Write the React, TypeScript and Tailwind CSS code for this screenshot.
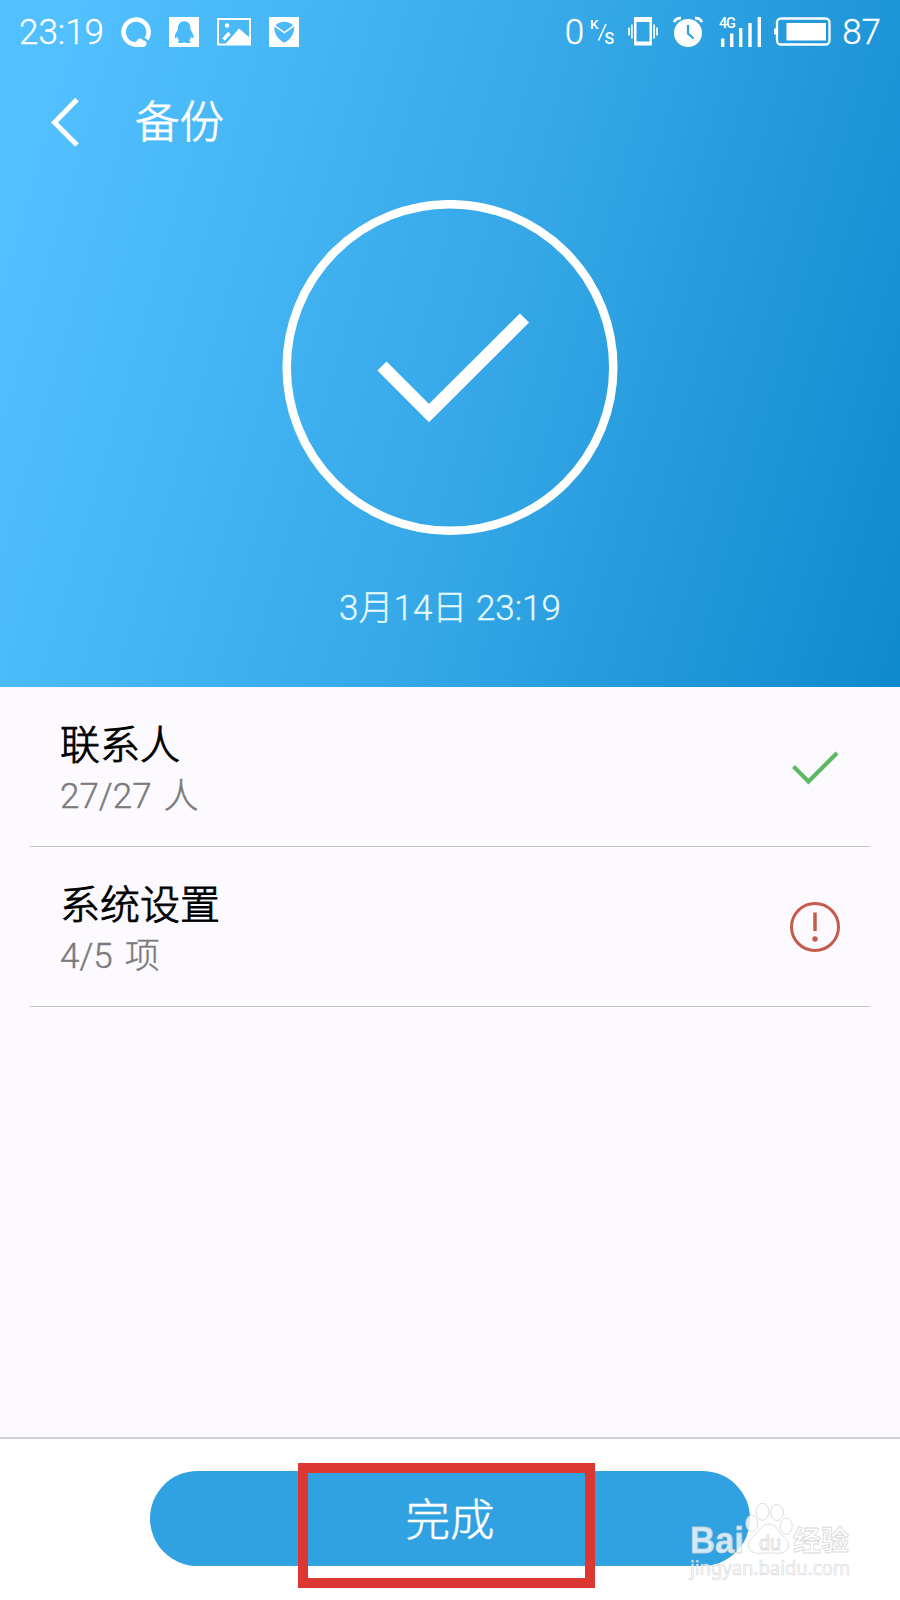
import type { ReactNode } from "react";

type BackupItem = {
  name: string;
  progress: string;
  unit: string;
  ok: boolean;
};

const items: BackupItem[] = [
  { name: "联系人", progress: "27/27", unit: "人", ok: true },
  { name: "系统设置", progress: "4/5", unit: "项", ok: false },
];

function StatusIcon({
  width,
  className = "",
  children,
}: {
  width: number;
  className?: string;
  children: ReactNode;
}) {
  return (
    <svg
      width={width}
      height={30}
      viewBox={`0 0 ${width} 30`}
      fill="none"
      className={`overflow-visible ${className}`}
    >
      {children}
    </svg>
  );
}

function StatusBar() {
  return (
    <div className="flex h-16 items-center justify-between pr-[19px] pl-[19px] text-[35px] leading-none font-light">
      <div className="flex items-center">
        <span className="w-[102px] [-webkit-text-stroke:0.3px]">23:19</span>
        <StatusIcon width={30}>
          <path
            d="M25.500 22A12.500 12.500 0 1 0 14 27.500"
            stroke="currentColor"
            strokeWidth="4.600"
          />
          <path
            d="M12 27.500c.5-2.500 3-2 4-4 1.500-3 5.500-2.500 6 0 2-.5 3.500 1 3.500 2.500 0 2-1.500 4-3.500 4h-7c-2 0-3.300-1-3-2.500Z"
            fill="currentColor"
          />
        </StatusIcon>
        <StatusIcon width={30} className="ml-[18px]">
          <path
            fillRule="evenodd"
            fill="currentColor"
            d="M0 0h30v30H0ZM15.200 4.300C11 4.300 8.700 7.500 8.900 12.500 7 15.500 5.600 18 5.800 20.500c.2 1.200 1.200.8 2.400-.7.3 1.500 1 2.700 2 3.700-1.600.6-1.900 2.500-.2 2.500 2 .1 3.800-.1 5.200-.8 1.400.7 3.200.9 5.200.8 1.700 0 1.400-1.900-.2-2.500 1-1 1.700-2.200 2-3.700 1.200 1.500 2.200 1.900 2.400.7.2-2.500-1.200-5-3.100-8C21.700 7.500 19.400 4.300 15.200 4.300Z"
          />
        </StatusIcon>
        <StatusIcon width={34} className="ml-[18px]">
          <rect x="1" y="2" width="32" height="25.500" stroke="currentColor" strokeWidth="2" />
          <circle cx="10" cy="8.500" r="2.300" fill="currentColor" />
          <path d="m6.500 22.500 6-6.500" stroke="currentColor" strokeWidth="3.500" />
          <path d="M8 27.500 22 11.500l11 9.500v6.500Z" fill="currentColor" />
        </StatusIcon>
        <StatusIcon width={30} className="ml-[18px]">
          <rect width="30" height="30" fill="currentColor" />
          <path
            d="M6.500 8.300C11 3.500 19.500 3.500 24 8.300L15.300 14.800Z"
            fill="#4ab8f9"
          />
          <path
            d="M5.300 9.500 15.300 16.500l10-7C25.500 17.500 21 22.500 15.300 25.700 9.500 22.500 5 17.500 5.300 9.500Z"
            fill="#4ab8f9"
          />
        </StatusIcon>
      </div>

      <div className="flex items-center">
        <span className="[-webkit-text-stroke:0.3px]">0</span>
        <StatusIcon width={26} className="ml-1.5">
          <g fill="currentColor" className="font-medium">
            <text x="0" y="11.500" fontSize="13.500">
              K
            </text>
            <text x="14.500" y="27" fontSize="16">
              S
            </text>
          </g>
          <path d="M8.500 23.500 16 7" stroke="currentColor" strokeWidth="1.600" />
        </StatusIcon>
        <StatusIcon width={30} className="ml-3">
          <path
            fillRule="evenodd"
            fill="currentColor"
            d="M7 0h16a1 1 0 0 1 1 1v26.500a1 1 0 0 1-1 1H7a1 1 0 0 1-1-1V1a1 1 0 0 1 1-1Zm1.500 5v19.500h13V5Z"
          />
          <path d="M1 10.500v8M3.900 7.500v14M26.100 7.500v14M29 10.500v8" stroke="currentColor" strokeWidth="1.700" />
        </StatusIcon>
        <StatusIcon width={30} className="ml-[15px]">
          <circle cx="15" cy="16" r="14" fill="currentColor" />
          <path d="M1 5.200Q3 1 8 1.200M22 1.200q5-.2 7 4" stroke="currentColor" strokeWidth="2.800" />
          <path d="M15 8v8.500l5.500 5" stroke="#2ea1e1" strokeWidth="2.200" />
        </StatusIcon>
        <StatusIcon width={43} className="ml-4">
          <text x="0" y="10.500" fontSize="14.500" textLength="17" fill="currentColor" className="font-medium">
            4G
          </text>
          <path
            d="M3.700 21.500V30M12.700 16.500V30M21.700 11V30M31 6V30M40.300 0V30"
            stroke="currentColor"
            strokeWidth="3.400"
          />
        </StatusIcon>
        <StatusIcon width={57} className="ml-3">
          <rect x="3" y="1.500" width="52.500" height="26" rx="4" stroke="currentColor" strokeWidth="2.300" />
          <path d="M0 11.500h2.500v6H0Z" fill="currentColor" />
          <path d="M12.500 6H52v17.500H12.500Z" fill="currentColor" />
        </StatusIcon>
        <span className="ml-[11px] [-webkit-text-stroke:0.3px]">87</span>
      </div>
    </div>
  );
}

function ItemRow({ item }: { item: BackupItem }) {
  return (
    <li className="mx-[30px] flex h-40 items-center justify-between border-b border-[#c6c5c9] pr-[30px] pl-[30px]">
      <div className="pt-2">
        <h2 className="text-[40px] leading-[51px] font-light text-black [-webkit-text-stroke:0.9px]">
          {item.name}
        </h2>
        <p className="flex gap-3 text-[35px] leading-[51px] font-light text-[#7b7a7d] [-webkit-text-stroke:0.4px]">
          <span>{item.progress}</span>
          <span>{item.unit}</span>
        </p>
      </div>
      {item.ok ? (
        <svg width="50" height="50" viewBox="0 0 50 50" fill="none">
          <path d="m3.500 24.500 15 15L47 11" stroke="#5cb863" strokeWidth="4.200" />
        </svg>
      ) : (
        <svg width="50" height="50" viewBox="0 0 50 50" fill="none" className="mt-px">
          <circle cx="25" cy="25" r="23.500" stroke="#c45c4b" strokeWidth="3" />
          <path d="M25 10.500v18.500" stroke="#c45c4b" strokeWidth="3.500" />
          <circle cx="25" cy="37" r="2.700" fill="#c45c4b" />
        </svg>
      )}
    </li>
  );
}

function Watermark() {
  return (
    <svg
      width="170"
      height="90"
      viewBox="0 0 170 90"
      className="absolute right-[44px] bottom-[12px]"
      fill="#fff"
      fillOpacity="0.8"
      stroke="#cfd0d2"
      strokeOpacity="0.8"
      strokeWidth="0.9"
    >
      <text x="4" y="55" fontSize="36" fontWeight="700" textLength="54" lengthAdjust="spacingAndGlyphs" className="font-['Liberation_Sans']">
        Bai
      </text>
      <ellipse cx="65.700" cy="25.300" rx="6" ry="8" />
      <ellipse cx="76.500" cy="13.800" rx="6.300" ry="8.500" />
      <ellipse cx="91" cy="14.500" rx="6.500" ry="8" />
      <ellipse cx="100.300" cy="28.300" rx="6" ry="8" />
      <path d="M83 26c-7 0-9 6-14 11-6 5-8 8-6 13 3 7 12 5 20 5s16 2 19-5c2-5-1-8-6-13-5-5-6-11-13-11Z" />
      <text x="73" y="52" fontSize="21" textLength="22" lengthAdjust="spacingAndGlyphs" className="font-['Liberation_Sans']">
        du
      </text>
      <text x="107" y="53" fontSize="28" fontWeight="700">
        经验
      </text>
      <text
        x="4"
        y="77"
        fontSize="19"
        fontWeight="400"
        strokeWidth="0.7"
        textLength="160"
        lengthAdjust="spacingAndGlyphs"
        className="font-['Noto_Sans']"
      >
        jingyan.baidu.com
      </text>
    </svg>
  );
}

export default function App() {
  return (
    <div className="relative flex h-[1600px] w-[900px] flex-col overflow-hidden bg-[#fcfaff] font-[Roboto,'Noto_Sans_CJK_SC',sans-serif]">
      <header className="flex h-[687px] flex-col bg-linear-[106deg] from-[#52c0ff] from-7% via-[#37a9e8] via-52% to-[#0f89cd] text-white">
        <StatusBar />
        <div className="flex h-[116px] items-center pl-[49px]">
          <svg width="32" height="50" viewBox="0 0 32 50" fill="none">
            <path d="M28 2.500 5.500 25.500 28 48" stroke="currentColor" strokeWidth="5" />
          </svg>
          <h1 className="ml-[54px] pt-0.5 text-[44.5px] leading-none font-light [-webkit-text-stroke:0.8px]">
            备份
          </h1>
        </div>
        <svg
          width="336"
          height="336"
          viewBox="0 0 336 336"
          fill="none"
          className="mt-5 self-center"
        >
          <circle cx="168" cy="167.500" r="163.300" stroke="currentColor" strokeWidth="8.500" />
          <path d="m100 166 47 47 95.500-95" stroke="currentColor" strokeWidth="13" />
        </svg>
        <p className="mt-[47px] text-center text-[35px] leading-[52px] font-light text-[#e4faff] [-webkit-text-stroke:0.3px]">
          3月14日 23:19
        </p>
      </header>

      <ul className="flex-1">
        {items.map((item) => (
          <ItemRow key={item.name} item={item} />
        ))}
      </ul>

      <footer className="flex h-[163px] justify-center border-t-2 border-[#cfced2] bg-white pt-8">
        <button className="relative h-[95px] w-[600px] rounded-full bg-[#30a2e2] pt-1.5 text-[44.5px] leading-none font-light text-white [-webkit-text-stroke:0.5px]">
          完成
          <span className="absolute -top-2 left-[148px] h-[125px] w-[297px] border-10 border-[#dc3731]" />
        </button>
      </footer>
      <Watermark />
    </div>
  );
}
